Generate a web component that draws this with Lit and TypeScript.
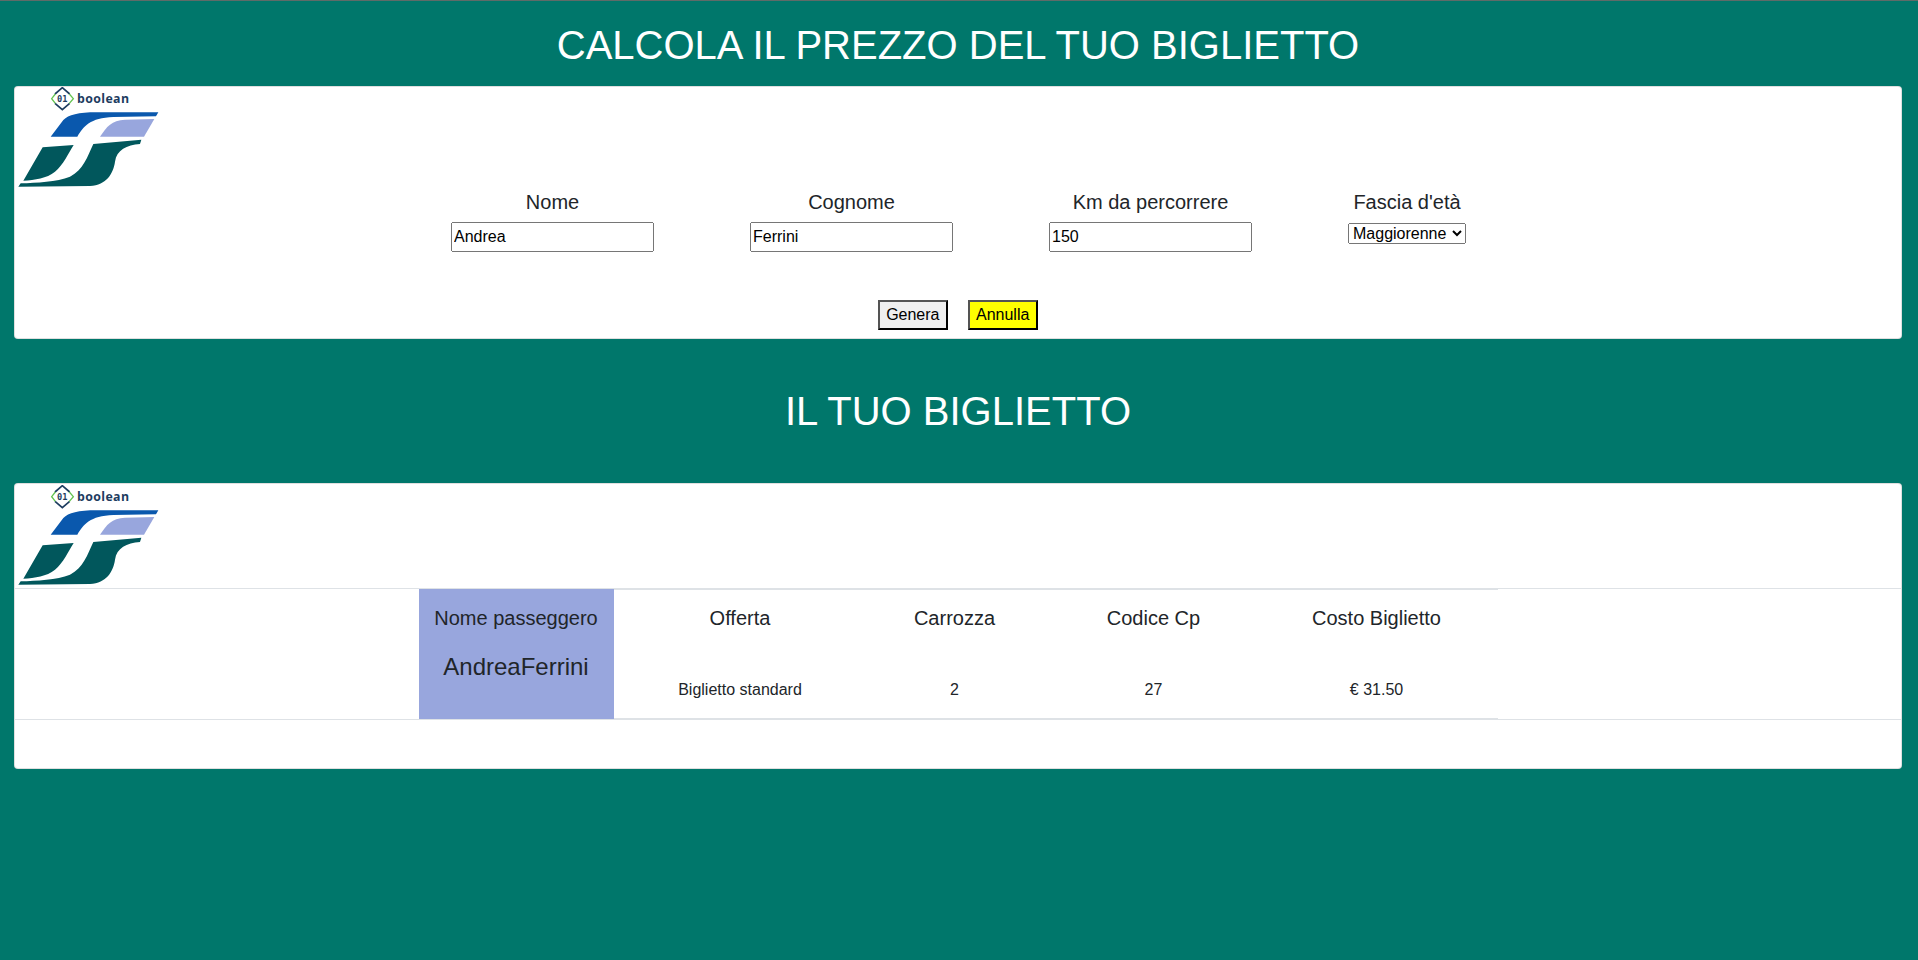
import { LitElement, html, css } from 'lit'
import { customElement, state } from 'lit/decorators.js'

@customElement('app-root')
export class AppRoot extends LitElement {
  static styles = css`
    :host {
      display: block;
      min-height: 960px;
      box-sizing: border-box;
      border-top: 1px solid #5f6b68;
      background: #00776b;
      font-family: 'Liberation Sans', Arial, sans-serif;
      font-size: 16px;
      line-height: 1.5;
      color: #212529;
    }

    h1 {
      margin: 0;
      font-size: 40px;
      font-weight: 400;
      line-height: 48px;
      color: #fff;
      text-align: center;
    }

    .title-top {
      padding: 20px 2px 17px 0;
    }

    .title-ticket {
      padding: 48px 2px 48px 0;
    }

    .card {
      margin: 0 16px 0 14px;
      background: #fff;
      border: 1px solid rgba(0, 0, 0, 0.125);
      border-radius: 4px;
    }

    .logo {
      display: block;
      width: 150px;
      height: 100px;
    }

    .logo text {
      font-family: 'Open Sans', sans-serif;
    }

    .logo text.bits {
      font-family: 'DejaVu Sans Mono', monospace;
    }

    .ticket-card .logo {
      margin-top: 1px;
    }

    .form-row {
      display: flex;
      justify-content: center;
      align-items: flex-start;
      gap: 96px;
      height: 113px;
      padding-left: 1px;
    }

    .field {
      display: flex;
      flex-direction: column;
      align-items: center;
    }

    .field label {
      font-size: 20px;
      line-height: 30px;
      margin-bottom: 5px;
    }

    input {
      box-sizing: border-box;
      width: 203px;
      height: 30px;
      padding: 1px 2px 1px 1px;
      font: 16px/24px 'Liberation Sans', Arial, sans-serif;
    }

    select {
      width: 118px;
      margin-top: 1px;
      font: 16px 'Liberation Sans', Arial, sans-serif;
    }

    .actions {
      display: flex;
      justify-content: center;
      gap: 20px;
      padding-bottom: 8px;
    }

    button {
      box-sizing: border-box;
      height: 30px;
      padding: 1px 6px;
      border: 2px outset #000;
      background: #efefef;
      color: #000;
      font: 16px/24px 'Liberation Sans', Arial, sans-serif;
    }

    button.cancel {
      padding: 1px 6.5px;
      background: #ff0;
    }

    .ticket-wrap {
      border-top: 1px solid #dee2e6;
      border-bottom: 1px solid #dee2e6;
      margin-top: 3px;
      margin-bottom: 48px;
    }

    table {
      width: 1079px;
      margin: 0 auto;
      table-layout: fixed;
      border-collapse: separate;
      border-spacing: 0;
      text-align: center;
    }

    th {
      box-sizing: border-box;
      padding: 13px 0 11px;
      font-size: 20px;
      font-weight: 400;
      line-height: 30px;
      border-top: 1px solid #dee2e6;
    }

    td {
      padding: 0 0 16px;
      vertical-align: bottom;
      border-bottom: 1px solid #dee2e6;
    }

    th.passenger,
    td.passenger {
      background: #98a6dd;
      border-color: #98a6dd;
    }

    td.passenger {
      vertical-align: top;
      padding: 5px 0 33px;
      font-size: 24px;
      line-height: 36px;
    }

    .c-name { width: 195px; }
    .c-offer { width: 253px; }
    .c-coach { width: 176px; }
    .c-code { width: 222px; }
    .c-cost { width: 233px; }

    th.c-cost,
    td.c-cost {
      padding-right: 9px;
    }
  `

  @state() private passenger = { nome: 'Andrea', cognome: 'Ferrini', km: '150' }

  renderLogo () {
    return html`
      <svg class="logo" viewBox="45 51 450 300" aria-hidden="true">
        <path d="M165 72 L187 53 L209 72 M165 100 L187 119 L209 100" fill="none" stroke="#1d3c5f" stroke-width="5"/>
        <path d="M166 72 L155 86 L166 100 M208 72 L220 86 L208 100" fill="none" stroke="#63c34f" stroke-width="4"/>
        <text class="bits" x="187" y="96" text-anchor="middle" font-size="26" font-weight="700" fill="#1d3c5f">01</text>
        <text x="231" y="98" font-size="37" font-weight="700" letter-spacing="1.2" fill="#1d3c5f">boolean</text>
        <path d="M475 127 L290 127 C235 127 205 135 190 150 L152 200 L232 200 C250 170 270 143 340 141 L468 139 Z" fill="#0a58ad"/>
        <path d="M463 147 L375 149 C335 150 320 170 300 200 L432 200 Z" fill="#98a6dd"/>
        <path d="M128 232 L221 225 C205 250 190 285 165 305 C140 325 105 330 70 332 Z" fill="#01575c"/>
        <path d="M424 209 L280 222 C262 260 250 300 210 320 C170 336 110 338 62 340 L55 350 L270 348 C320 345 340 310 345 275 C350 240 380 225 420 222 Z" fill="#01575c"/>
      </svg>
    `
  }

  render () {
    return html`
      <h1 class="title-top">CALCOLA IL PREZZO DEL TUO BIGLIETTO</h1>
      <section class="card">
        ${this.renderLogo()}
        <div class="form-row">
          <div class="field">
            <label for="nome">Nome</label>
            <input id="nome" type="text" .value="${this.passenger.nome}">
          </div>
          <div class="field">
            <label for="cognome">Cognome</label>
            <input id="cognome" type="text" .value="${this.passenger.cognome}">
          </div>
          <div class="field">
            <label for="km">Km da percorrere</label>
            <input id="km" type="text" .value="${this.passenger.km}">
          </div>
          <div class="field">
            <label for="eta">Fascia d'età</label>
            <select id="eta">
              <option>Maggiorenne</option>
              <option>Minorenne</option>
              <option>Over 65</option>
            </select>
          </div>
        </div>
        <div class="actions">
          <button>Genera</button>
          <button class="cancel">Annulla</button>
        </div>
      </section>

      <h1 class="title-ticket">IL TUO BIGLIETTO</h1>
      <section class="card ticket-card">
        ${this.renderLogo()}
        <div class="ticket-wrap">
          <table>
            <thead>
              <tr>
                <th class="passenger c-name">Nome passeggero</th>
                <th class="c-offer">Offerta</th>
                <th class="c-coach">Carrozza</th>
                <th class="c-code">Codice Cp</th>
                <th class="c-cost">Costo Biglietto</th>
              </tr>
            </thead>
            <tbody>
              <tr>
                <td class="passenger">${this.passenger.nome}${this.passenger.cognome}</td>
                <td>Biglietto standard</td>
                <td>2</td>
                <td>27</td>
                <td class="c-cost">€ 31.50</td>
              </tr>
            </tbody>
          </table>
        </div>
      </section>
    `
  }
}
